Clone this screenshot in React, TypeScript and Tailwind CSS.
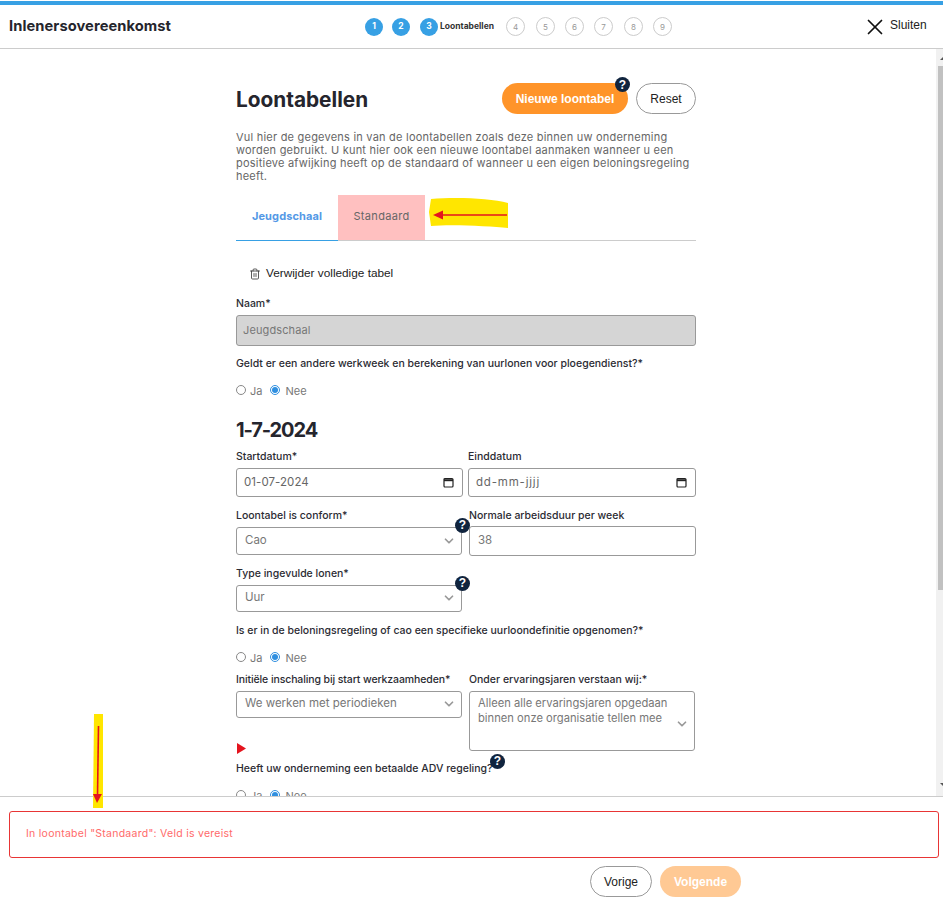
import React from "react";
import { X, Trash2, ChevronDown } from "lucide-react";

const Badge = ({ className }: { className?: string }) => (
  <span className={`absolute flex h-[15px] w-[15px] items-center justify-center rounded-full bg-[#10243e] font-['Liberation_Sans',sans-serif] text-[12px] font-bold leading-none text-white ${className}`}>
    ?
  </span>
);

const Label = ({ children, className }: { children: React.ReactNode; className?: string }) => (
  <div className={`whitespace-nowrap text-[10.5px] font-medium leading-[13px] text-[#2b2b33] ${className}`}>{children}</div>
);

const RadioRow = ({ className }: { className?: string }) => (
  <div className={`flex h-[14px] items-center text-[11px] leading-[12px] text-[#777] ${className}`}>
    <span className="h-[10px] w-[10px] rounded-full border border-[#888] bg-white" />
    <span className="ml-[4px] pt-[2px]">Ja</span>
    <span className="ml-[8px] flex h-[10px] w-[10px] items-center justify-center rounded-full border border-[#2f8fe0] bg-white">
      <span className="h-[6px] w-[6px] rounded-full bg-[#2f8fe0]" />
    </span>
    <span className="ml-[5px] pt-[2px]">Nee</span>
  </div>
);

const Select = ({ value, className }: { value: string; className?: string }) => (
  <div className={`flex w-[226px] items-center justify-between rounded-[3px] border border-[#999] bg-white pl-[8px] pr-[5px] text-[11.5px] text-[#777] ${className}`}>
    <span className="pb-[1px]">{value}</span>
    <ChevronDown size={14} strokeWidth={3} className="text-[#999]" />
  </div>
);

const CalendarIcon = () => (
  <svg width="11" height="11" viewBox="0 0 11 11" fill="none">
    <rect x="1" y="1.5" width="9" height="8.5" rx="1" stroke="#222" strokeWidth="1.2" />
    <path d="M1 3.2 H10" stroke="#222" strokeWidth="2" />
  </svg>
);

const DateInput = ({ value, className }: { value: string; className?: string }) => (
  <div className={`flex h-[29px] items-center justify-between rounded-[3px] border border-[#999] bg-white pl-[7px] pr-[8px] text-[11.5px] text-[#666] ${className}`}>
    <span>{value}</span>
    <CalendarIcon />
  </div>
);

const Step = ({ n, active }: { n: number; active?: boolean }) =>
  active ? (
    <span className="flex h-[18px] w-[18px] items-center justify-center rounded-full bg-[#37a0e4] text-[8.5px] font-bold text-white">{n}</span>
  ) : (
    <span className="flex h-[19px] w-[19px] items-center justify-center rounded-full border border-[#ccc] text-[8px] text-[#999]">{n}</span>
  );

export default function App() {
  return (
    <div className="relative flex h-[903px] w-[943px] flex-col overflow-hidden bg-white font-['Inter',sans-serif]">
      {/* top bar */}
      <div className="mt-[1px] h-[4px] bg-[#37a0e4]" />
      <header className="flex h-[44px] items-center border-b border-[#ccc] pl-[9px]">
        <div className="w-[356px] pb-[1px] text-[14.7px] font-bold tracking-[0.005em] text-[#25252d]">Inlenersovereenkomst</div>
        <div className="flex items-center">
          <Step n={1} active />
          <span className="w-[9px]" />
          <Step n={2} active />
          <span className="w-[10px]" />
          <Step n={3} active />
          <span className="ml-[2px] w-[66px] text-[8.5px] font-bold text-[#333]">Loontabellen</span>
          <Step n={4} />
          <span className="w-[11px]" />
          <Step n={5} />
          <span className="w-[10px]" />
          <Step n={6} />
          <span className="w-[10px]" />
          <Step n={7} />
          <span className="w-[11px]" />
          <Step n={8} />
          <span className="w-[10px]" />
          <Step n={9} />
        </div>
        <div className="ml-[190px] flex items-center font-['Liberation_Sans',sans-serif] text-[12px] text-[#222]">
          <X size={26} strokeWidth={1.6} className="text-[#111]" />
          <span className="ml-[2px] pb-[3px]">Sluiten</span>
        </div>
      </header>

      <div className="flex h-[747px]">
        <main className="h-full flex-1 overflow-hidden pl-[236px]">
          <div className="w-[460px]">
            <div className="mt-[34px] flex h-[31px] items-center justify-between">
              <h1 className="h-[31px] text-[20.8px] font-bold leading-[33px] text-[#25252d]">Loontabellen</h1>
              <div className="flex items-center">
                <div className="relative flex h-[31px] w-[126px] items-center justify-center rounded-full bg-[#ff9429] font-['Liberation_Sans',sans-serif] text-[12px] font-bold text-white">
                  Nieuwe loontabel
                  <Badge className="right-[-2px] top-[-6px]" />
                </div>
                <div className="ml-[8px] flex h-[31px] w-[60px] items-center justify-center rounded-full border border-[#999] font-['Liberation_Sans',sans-serif] text-[12px] text-[#222]">
                  Reset
                </div>
              </div>
            </div>

            <p className="mt-[17px] text-[11px] leading-[13px] tracking-[0.02em] text-[#666]">
              Vul hier de gegevens in van de loontabellen zoals deze binnen uw onderneming
              <br />
              worden gebruikt. U kunt hier ook een nieuwe loontabel aanmaken wanneer u een
              <br />
              positieve afwijking heeft op de standaard of wanneer u een eigen beloningsregeling
              <br />
              heeft.
            </p>

            <div className="mt-[12px] flex h-[46px] border-b border-[#ccc] text-[11px]">
              <div className="flex h-[46px] w-[102px] items-center justify-center border-b border-[#37a0e4] pb-[2px] font-bold tracking-[0.01em] text-[#5499e6]">Jeugdschaal</div>
              <div className="flex h-[45px] w-[87px] items-center justify-center bg-[#ffc0c0] pb-[2px] tracking-[0.03em] text-[#666]">Standaard</div>
            </div>

            <div className="ml-[13px] mt-[24px] flex items-center font-['Liberation_Sans',sans-serif] text-[11.8px] text-[#222]">
              <Trash2 size={12} strokeWidth={1.6} className="text-[#333]" />
              <span className="ml-[5px]">Verwijder volledige tabel</span>
            </div>

            <Label className="mt-[14px]">Naam*</Label>
            <div className="mt-[5px] flex h-[31px] items-center rounded-[3px] border border-[#999] bg-[#d5d5d5] pl-[6px] text-[11px] tracking-[0.01em] text-[#777]">Jeugdschaal</div>
            <Label className="mt-[11px]">Geldt er een andere werkweek en berekening van uurlonen voor ploegendienst?*</Label>
            <RadioRow className="mt-[13px]" />

            <h2 className="mt-[21px] text-[20px] font-bold leading-[24px] tracking-[-0.055em] text-[#25252d]">1-7-2024</h2>

            <div className="mt-[8px] flex">
              <div className="w-[233px]">
                <Label>Startdatum*</Label>
                <DateInput value="01-07-2024" className="mt-[5px] w-[227px] tracking-[0.005em]" />
              </div>
              <div>
                <Label>Einddatum</Label>
                <DateInput value="dd-mm-jjjj" className="mt-[5px] w-[228px] tracking-[0.07em]" />
              </div>
            </div>

            <div className="mt-[12px] flex">
              <div className="relative w-[233px]">
                <Label>Loontabel is conform*</Label>
                <Select value="Cao" className="mt-[5px] h-[28px]" />
                <Badge className="left-[219px] top-[9px]" />
              </div>
              <div>
                <Label>Normale arbeidsduur per week</Label>
                <div className="mt-[4px] flex h-[30px] w-[227px] items-center rounded-[3px] border border-[#999] bg-white pl-[8px] text-[11.5px] text-[#777]">38</div>
              </div>
            </div>

            <div className="relative mt-[11px] w-[233px]">
              <Label>Type ingevulde lonen*</Label>
              <Select value="Uur" className="mt-[5px] h-[27px]" />
              <Badge className="left-[219px] top-[9px]" />
            </div>

            <Label className="mt-[12px]">Is er in de beloningsregeling of cao een specifieke uurloondefinitie opgenomen?*</Label>
            <RadioRow className="mt-[13px]" />

            <div className="mt-[9px] flex">
              <div className="w-[233px]">
                <Label className="tracking-[-0.01em]">Initiële inschaling bij start werkzaamheden*</Label>
                <Select value="We werken met periodieken" className="mt-[5px] h-[27px]" />
              </div>
              <div>
                <Label>Onder ervaringsjaren verstaan wij:*</Label>
                <div className="mt-[5px] flex h-[60px] w-[226px] items-start justify-between rounded-[3px] border border-[#999] bg-white pl-[8px] pr-[5px] pt-[4px] text-[11.2px] leading-[15px] text-[#777]">
                  <span className="whitespace-nowrap">
                    Alleen alle ervaringsjaren opgedaan
                    <br />
                    binnen onze organisatie tellen mee
                  </span>
                  <ChevronDown size={14} strokeWidth={3} className="mt-[21px] text-[#999]" />
                </div>
              </div>
            </div>

            <div className="relative mt-[11px]">
              <Label>Heeft uw onderneming een betaalde ADV regeling?</Label>
              <Badge className="left-[254px] top-[-8px]" />
            </div>
            <RadioRow className="mt-[13px]" />
          </div>
        </main>
        {/* scrollbar */}
        <div className="flex w-[7px] flex-col bg-[#f1f1f1]">
          <svg className="mt-[7px] h-[4px] w-[7px]" viewBox="0 0 7 4">
            <path d="M4 4 L7 1 L7 4 Z" fill="#555" />
          </svg>
          <div className="ml-[2px] mt-[6px] h-[524px] bg-[#c1c1c1]" />
          <svg className="mt-[193px] h-[4px] w-[7px]" viewBox="0 0 7 4">
            <path d="M4 0 L7 0 L7 3 Z" fill="#555" />
          </svg>
        </div>
      </div>

      <footer className="flex-1 border-t border-[#ccc] bg-white px-[9px] pt-[14px]">
        <div className="flex h-[47px] w-[930px] items-center rounded-[3px] border border-[#e83535] pb-[1px] pl-[16px] text-[10.5px] tracking-[0.025em] text-[#ff6a6a]">
          In loontabel "Standaard": Veld is vereist
        </div>
        <div className="ml-[581px] mt-[8px] flex font-['Liberation_Sans',sans-serif] text-[12px]">
          <div className="flex h-[31px] w-[62px] items-center justify-center rounded-full border border-[#999] text-[#222]">Vorige</div>
          <div className="ml-[8px] flex h-[31px] w-[81px] items-center justify-center rounded-full bg-[#ffc994] font-bold text-white">Volgende</div>
        </div>
      </footer>

      {/* hand drawn annotations on top of the screenshot */}
      <svg className="pointer-events-none absolute left-0 top-0" width="943" height="903" viewBox="0 0 943 903">
        <path d="M431 199 C455 197 490 198 508 203 L508 228 C490 226 450 224 431 226 L429 212 Z" fill="#ffe600" />
        <path d="M507 215 L442 215" stroke="#e4141e" strokeWidth="1.6" fill="none" />
        <path d="M433 215 L443 210.5 L443 219.5 Z" fill="#e4141e" />
        <path d="M94 714 L103 714 L103 808 L93 808 Z" fill="#ffe600" />
        <path d="M98.5 726 L97.5 796" stroke="#e4141e" strokeWidth="1.6" fill="none" />
        <path d="M93 794 L102 794 L97 803 Z" fill="#e4141e" />
        <path d="M237 743 L246 748.5 L237 754 Z" fill="#e4141e" />
      </svg>
    </div>
  );
}
